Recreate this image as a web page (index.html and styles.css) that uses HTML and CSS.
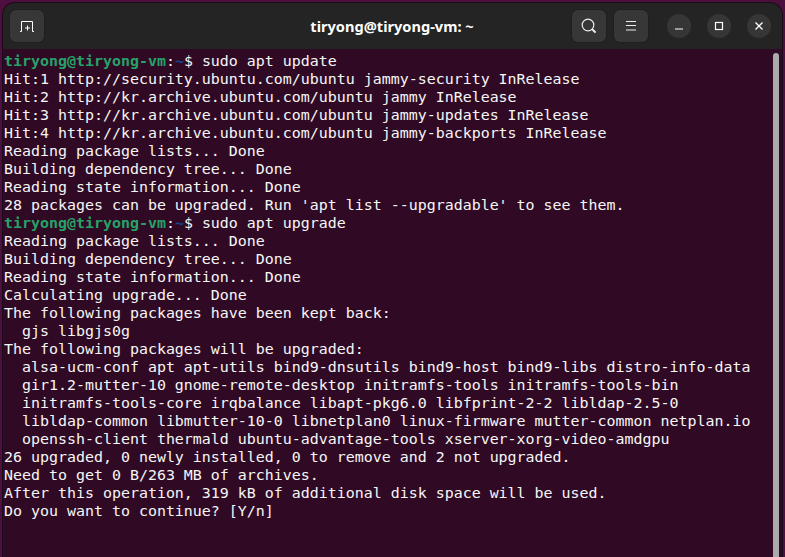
FILE: index.html
```html
<!DOCTYPE html>
<html lang="en">
<head>
<meta charset="utf-8">
<title>tiryong@tiryong-vm: ~</title>
<link rel="stylesheet" href="styles.css">
</head>
<body>
<div class="window">
  <header class="titlebar">
    <button class="tool" aria-label="New tab">
      <svg width="16" height="16" viewBox="0 0 16 16" fill="none" stroke="#fff" stroke-width="1"><path d="M1 13.500h1.500V3.500h11v10h1.500M8.500 7.500v5M6 10h5"/></svg>
    </button>
    <div class="title">tiryong@tiryong-vm: ~</div>
    <button class="tool" aria-label="Search">
      <svg width="16" height="16" viewBox="0 0 16 16" fill="none" stroke="#eee" stroke-width="1.200"><circle cx="7" cy="7" r="5.800"/><path d="M11.200 11.200l3.400 3.400" stroke-width="2"/></svg>
    </button>
    <button class="tool menu" aria-label="Menu">
      <svg width="16" height="16" viewBox="0 0 16 16" fill="none" stroke="#eee" stroke-width="1"><path d="M3 3.500h10M3 7.500h10M3 12h10"/></svg>
    </button>
    <div class="controls">
      <button class="ctl" aria-label="Minimize">
        <svg width="10" height="10" viewBox="0 0 10 10" stroke="#fff" stroke-width="1.200"><path d="M1 8h8"/></svg>
      </button>
      <button class="ctl" aria-label="Maximize">
        <svg width="10" height="10" viewBox="0 0 10 10" fill="none" stroke="#fff" stroke-width="1.200"><rect x="1.500" y="1.500" width="7" height="7"/></svg>
      </button>
      <button class="ctl" aria-label="Close">
        <svg width="10" height="10" viewBox="0 0 10 10" stroke="#fff" stroke-width="1.300"><path d="M1.500 1.500l7 7M8.500 1.500l-7 7"/></svg>
      </button>
    </div>
  </header>
  <div class="body">
    <div class="term">
      <div class="line"><span class="user">tiryong@tiryong-vm</span><span>:</span><span class="path">~</span><span>$ sudo apt update</span></div>
      <div class="line">Hit:1 http://security.ubuntu.com/ubuntu jammy-security InRelease</div>
      <div class="line">Hit:2 http://kr.archive.ubuntu.com/ubuntu jammy InRelease</div>
      <div class="line">Hit:3 http://kr.archive.ubuntu.com/ubuntu jammy-updates InRelease</div>
      <div class="line">Hit:4 http://kr.archive.ubuntu.com/ubuntu jammy-backports InRelease</div>
      <div class="line">Reading package lists... Done</div>
      <div class="line">Building dependency tree... Done</div>
      <div class="line">Reading state information... Done</div>
      <div class="line">28 packages can be upgraded. Run 'apt list --upgradable' to see them.</div>
      <div class="line"><span class="user">tiryong@tiryong-vm</span><span>:</span><span class="path">~</span><span>$ sudo apt upgrade</span></div>
      <div class="line">Reading package lists... Done</div>
      <div class="line">Building dependency tree... Done</div>
      <div class="line">Reading state information... Done</div>
      <div class="line">Calculating upgrade... Done</div>
      <div class="line">The following packages have been kept back:</div>
      <div class="line">  gjs libgjs0g</div>
      <div class="line">The following packages will be upgraded:</div>
      <div class="line">  alsa-ucm-conf apt apt-utils bind9-dnsutils bind9-host bind9-libs distro-info-data</div>
      <div class="line">  gir1.2-mutter-10 gnome-remote-desktop initramfs-tools initramfs-tools-bin</div>
      <div class="line">  initramfs-tools-core irqbalance libapt-pkg6.0 libfprint-2-2 libldap-2.5-0</div>
      <div class="line">  libldap-common libmutter-10-0 libnetplan0 linux-firmware mutter-common netplan.io</div>
      <div class="line">  openssh-client thermald ubuntu-advantage-tools xserver-xorg-video-amdgpu</div>
      <div class="line">26 upgraded, 0 newly installed, 0 to remove and 2 not upgraded.</div>
      <div class="line">Need to get 0 B/263 MB of archives.</div>
      <div class="line">After this operation, 319 kB of additional disk space will be used.</div>
      <div class="line">Do you want to continue? [Y/n]</div>
    </div>
    <div class="scrollbar"></div>
  </div>
</div>
</body>
</html>
```
FILE: styles.css
```css
html, body {
  margin: 0;
  height: 100%;
  overflow: hidden;
}
body {
  background: #4c0f3e;
  padding: 3px 3px 0 3px;
  box-sizing: border-box;
}
.window {
  height: 100%;
  display: flex;
  flex-direction: column;
  border-radius: 12px 12px 0 0;
  overflow: hidden;
  background: #300a24;
  box-shadow: 0 0 0 1px #1c0a18;
}
.titlebar {
  height: 46px;
  flex: none;
  display: flex;
  align-items: center;
  padding: 0 7px;
  background: #242424;
  box-sizing: border-box;
}
.title {
  flex: 1;
  text-align: center;
  color: #ffffff;
  font: bold 14.600px "Noto Sans", "Liberation Sans", sans-serif;
  padding-left: 168px;
  box-sizing: border-box;
}
button {
  border: 0;
  padding: 0;
  display: flex;
  align-items: center;
  justify-content: center;
}
.tool {
  width: 34px;
  height: 32px;
  border-radius: 6px;
  background: #373737;
  box-shadow: 0 0 0 1px #1f1f1f;
}
.menu {
  margin-left: 8px;
}
.controls {
  display: flex;
  gap: 16px;
  margin-left: 19px;
  margin-right: 4px;
}
.ctl {
  width: 24px;
  height: 24px;
  border-radius: 50%;
  background: #363636;
}
.body {
  flex: 1;
  display: flex;
  min-height: 0;
  padding-right: 3px;
}
.term {
  flex: 1;
  padding: 3px 0 0 1px;
  color: #f6f6f6;
  font: 14.950px/18px "DejaVu Sans Mono", "Liberation Mono", monospace;
}
.line {
  height: 18px;
  white-space: pre;
}
.user {
  color: #26a269;
  font-weight: bold;
}
.path {
  color: #12488b;
  font-weight: bold;
}
.scrollbar {
  width: 6px;
  margin-top: 4px;
  background: #ababab;
  border-radius: 3px 3px 0 0;
}
```
